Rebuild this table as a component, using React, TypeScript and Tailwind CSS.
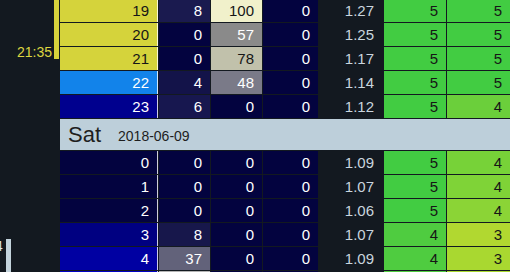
import React from 'react'

type Cell = { v: string; bg: string; fg: string }

interface Row {
  hour: Cell
  a: Cell
  b: Cell
  c: Cell
  rate: string
  d: Cell
  e: Cell
}

const NAVY = 'bg-[#03033f]'
const W = 'text-white'
const D = 'text-[#161616]'

const c = (v: string, bg: string, fg: string): Cell => ({ v, bg, fg })

const topRows: Row[] = [
  { hour: c('19', 'bg-[#d5d33b]', D), a: c('8', 'bg-[#1a1a4f]', W), b: c('100', 'bg-[#f1f1cb]', D), c: c('0', NAVY, W), rate: '1.27', d: c('5', 'bg-[#42cc42]', D), e: c('5', 'bg-[#42cc42]', D) },
  { hour: c('20', 'bg-[#d5d33b]', D), a: c('0', NAVY, W), b: c('57', 'bg-[#8a8a8a]', W), c: c('0', NAVY, W), rate: '1.25', d: c('5', 'bg-[#42cc42]', D), e: c('5', 'bg-[#42cc42]', D) },
  { hour: c('21', 'bg-[#d5d33b]', D), a: c('0', NAVY, W), b: c('78', 'bg-[#c1c1ab]', D), c: c('0', NAVY, W), rate: '1.17', d: c('5', 'bg-[#42cc42]', D), e: c('5', 'bg-[#42cc42]', D) },
  { hour: c('22', 'bg-[#1283ea]', W), a: c('4', 'bg-[#131349]', W), b: c('48', 'bg-[#7a7a88]', W), c: c('0', NAVY, W), rate: '1.14', d: c('5', 'bg-[#42cc42]', D), e: c('5', 'bg-[#42cc42]', D) },
  { hour: c('23', 'bg-[#00008e]', W), a: c('6', 'bg-[#17174f]', W), b: c('0', NAVY, W), c: c('0', NAVY, W), rate: '1.12', d: c('5', 'bg-[#42cc42]', D), e: c('4', 'bg-[#6bcf3b]', D) },
]

const satRows: Row[] = [
  { hour: c('0', NAVY, W), a: c('0', NAVY, W), b: c('0', NAVY, W), c: c('0', NAVY, W), rate: '1.09', d: c('5', 'bg-[#42cc42]', D), e: c('4', 'bg-[#77d238]', D) },
  { hour: c('1', NAVY, W), a: c('0', NAVY, W), b: c('0', NAVY, W), c: c('0', NAVY, W), rate: '1.07', d: c('5', 'bg-[#42cc42]', D), e: c('4', 'bg-[#7fd337]', D) },
  { hour: c('2', NAVY, W), a: c('0', NAVY, W), b: c('0', NAVY, W), c: c('0', NAVY, W), rate: '1.06', d: c('5', 'bg-[#42cc42]', D), e: c('4', 'bg-[#8bd436]', D) },
  { hour: c('3', 'bg-[#000081]', W), a: c('8', 'bg-[#17174b]', W), b: c('0', NAVY, W), c: c('0', NAVY, W), rate: '1.07', d: c('4', 'bg-[#4fcc40]', D), e: c('3', 'bg-[#b1d830]', D) },
  { hour: c('4', 'bg-[#0000a2]', W), a: c('37', 'bg-[#62627a]', W), b: c('0', NAVY, W), c: c('0', NAVY, W), rate: '1.09', d: c('4', 'bg-[#4fcc40]', D), e: c('3', 'bg-[#a9d830]', D) },
  // only the top edge of this row is on screen
  { hour: c('', 'bg-[#0000c4]', W), a: c('', 'bg-[#b4b4b4]', W), b: c('', NAVY, W), c: c('', NAVY, W), rate: '', d: c('', 'bg-[#4fcc40]', D), e: c('', 'bg-[#a9d830]', D) },
]

function DataCell({ cell, first }: { cell: Cell; first?: boolean }) {
  return (
    <div className={`${cell.bg} ${cell.fg} flex items-center justify-end pr-[8px] ${first ? 'border-r border-white/80' : ''}`}>
      {cell.v}
    </div>
  )
}

function TableRow({ row }: { row: Row }) {
  return (
    <div className="grid h-[23px] shrink-0 grid-cols-[98px_51px_51px_55px_64px_62px_63px] gap-px text-[15px] leading-none">
      <DataCell cell={row.hour} first />
      <DataCell cell={row.a} />
      <DataCell cell={row.b} />
      <DataCell cell={row.c} />
      <div className="flex items-center justify-end pr-[9px] text-[#c9d5de]">{row.rate}</div>
      <DataCell cell={row.d} />
      <DataCell cell={row.e} />
    </div>
  )
}

export default function App() {
  return (
    <div className="flex h-[272px] w-[510px] overflow-hidden bg-[#131920]" style={{ fontFamily: '"Liberation Sans", Arial, sans-serif' }}>
      <div className="relative w-[60px] shrink-0">
        <div className="absolute left-[54px] top-0 h-[59px] w-[5px] bg-[#d7d23c]" />
        <div className="absolute right-[8px] top-[45px] text-[14px] leading-none text-[#ddd640]">21:35</div>
        <div className="absolute left-[6px] top-[239px] h-[40px] w-[5px] bg-[#c3d3dc]" />
        <div className="absolute -left-[5px] top-[239px] text-[14px] leading-none text-[#dfe6ee]">4</div>
      </div>
      <div className="-mt-px flex shrink-0 flex-col gap-px">
        {topRows.map((r) => (
          <TableRow key={r.hour.v} row={r} />
        ))}
        <div className="flex h-[31px] shrink-0 items-center bg-[#bdcfda] pl-[8px] text-[#1e1e1e]">
          <span className="text-[22px] leading-none">Sat</span>
          <span className="ml-[17px] mt-[3px] text-[14px] leading-none">2018-06-09</span>
        </div>
        {satRows.map((r, i) => (
          <TableRow key={'s' + i} row={r} />
        ))}
      </div>
    </div>
  )
}
